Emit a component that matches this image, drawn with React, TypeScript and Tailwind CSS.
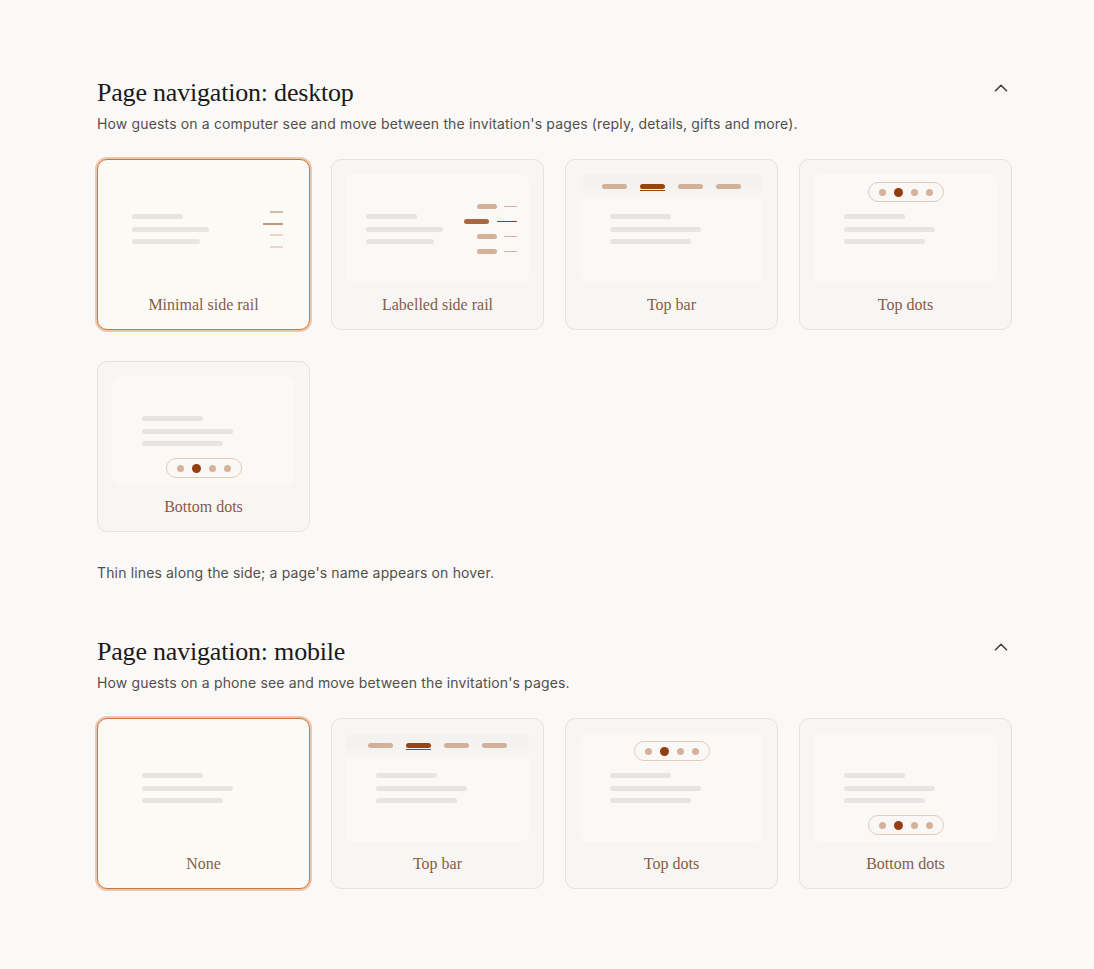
import React from "react";
import { ChevronUp } from "lucide-react";

type Kind = "minimal" | "labelled" | "topbar" | "topdots" | "bottomdots" | "none";

function Lines({ rail }: { rail: boolean }) {
  const widths = rail ? ["w-[51px]", "w-[77px]", "w-[68px]"] : ["w-[61px]", "w-[91px]", "w-[81px]"];
  return (
    <div className={`absolute top-[40px] flex flex-col gap-[7.5px] ${rail ? "left-[20px]" : "left-[30px]"}`}>
      {widths.map((w, i) => (
        <div key={i} className={`h-[5px] ${w} rounded-full bg-[#e6e5e2]`} />
      ))}
    </div>
  );
}

function Dots() {
  return (
    <div className="flex h-[20px] w-[76px] items-center justify-center gap-[8px] rounded-full border border-[#e2cab9] bg-[#faf8f6]">
      <div className="h-[7px] w-[7px] rounded-full bg-[#d4b29c]" />
      <div className="h-[9px] w-[9px] rounded-full bg-[#933e10]" />
      <div className="h-[7px] w-[7px] rounded-full bg-[#d4b29c]" />
      <div className="h-[7px] w-[7px] rounded-full bg-[#d4b29c]" />
    </div>
  );
}

function Preview({ kind, selected }: { kind: Kind; selected: boolean }) {
  const rail = kind === "minimal" || kind === "labelled";
  return (
    <div
      className={`relative h-[109px] w-full overflow-hidden rounded-[8px] ${
        selected ? "bg-[#fcfaf5]" : "bg-[#faf9f7]"
      }`}
    >
      {kind === "topbar" && (
        <div className="absolute left-0 right-0 top-0 h-[28px] bg-gradient-to-b from-[#f3f2f0] via-[#f4f3f1] to-[#faf9f7]">
          <div className="flex justify-center gap-[13px] pt-[10px]">
            <div className="h-[5px] w-[25px] rounded-full bg-[#d2b19b]" />
            <div className="flex flex-col gap-[1px]">
              <div className="h-[5px] w-[25px] rounded-full bg-[#964515]" />
              <div className="h-[1px] w-[25px] bg-[#964515]" />
            </div>
            <div className="h-[5px] w-[25px] rounded-full bg-[#d2b19b]" />
            <div className="h-[5px] w-[25px] rounded-full bg-[#d2b19b]" />
          </div>
        </div>
      )}
      <Lines rail={rail} />
      {kind === "minimal" && (
        <div className="absolute right-[12px] top-[37px] flex flex-col items-end gap-[9.5px]">
          <div className="h-[2px] w-[13px] bg-[#d7bba8]" />
          <div className="h-[2px] w-[20px] bg-[#c4987c]" />
          <div className="h-[2px] w-[13px] bg-[#e6d6cb]" />
          <div className="h-[2px] w-[13px] bg-[#e6d6cb]" />
        </div>
      )}
      {kind === "labelled" && (
        <div className="absolute right-[12px] top-[29.5px] flex flex-col items-end gap-[10px]">
          {[0, 1, 2, 3].map((i) =>
            i === 1 ? (
              <div key={i} className="flex h-[5px] items-center gap-[8px]">
                <div className="h-[5px] w-[25px] rounded-full bg-[#a8673e]" />
                <div className="h-[1px] w-[20px] bg-[#8e3e12]" />
              </div>
            ) : (
              <div key={i} className="flex h-[5px] items-center gap-[7px]">
                <div className="h-[5px] w-[20px] rounded-full bg-[#d3b19b]" />
                <div className="h-[1px] w-[13px] bg-[#d5b19b]" />
              </div>
            )
          )}
        </div>
      )}
      {kind === "topdots" && (
        <div className="absolute left-0 right-0 top-[8px] flex justify-center">
          <Dots />
        </div>
      )}
      {kind === "bottomdots" && (
        <div className="absolute bottom-[7px] left-0 right-0 flex justify-center">
          <Dots />
        </div>
      )}
    </div>
  );
}

function Card({ kind, label, selected = false }: { kind: Kind; label: string; selected?: boolean }) {
  return (
    <div
      className={`flex h-[171px] flex-col items-center rounded-[10px] border p-[14px] ${
        selected
          ? "border-[#c8773f] bg-[#fcfaf5] shadow-[0_0_0_2px_#ebc9ae]"
          : "border-[#e6e3df] bg-[#f7f6f4]"
      }`}
    >
      <Preview kind={kind} selected={selected} />
      <div
        className="mt-[12px] text-[16px] leading-[20px] text-[#875c45]"
        style={{ fontFamily: '"Liberation Serif", "DejaVu Serif", serif' }}
      >
        {label}
      </div>
    </div>
  );
}

function Header({ title, desc }: { title: string; desc: string }) {
  return (
    <div>
      <div className="flex items-start justify-between">
        <h2
          className="text-[26px] leading-[32px] tracking-[-0.2px] text-[#1c1917]"
          style={{ fontFamily: '"Liberation Serif", "DejaVu Serif", serif' }}
        >
          {title}
        </h2>
        <ChevronUp size={22} strokeWidth={1.75} className="text-[#44403c]" />
      </div>
      <p className="mt-[5px] text-[14px] leading-[20px] tracking-[0.15px] text-[#524f4b]">{desc}</p>
    </div>
  );
}

export default function App() {
  return (
    <div
      className="min-h-[969px] w-full bg-[#faf9f7] pt-[77px]"
      style={{ fontFamily: 'Inter, "Noto Sans", sans-serif' }}
    >
      <div className="ml-[97px] w-[915px]">
        <section>
          <Header
            title="Page navigation: desktop"
            desc="How guests on a computer see and move between the invitation's pages (reply, details, gifts and more)."
          />
          <div className="mt-[25px] grid grid-cols-4 gap-x-[21px] gap-y-[31px]">
            <Card kind="minimal" label="Minimal side rail" selected />
            <Card kind="labelled" label="Labelled side rail" />
            <Card kind="topbar" label="Top bar" />
            <Card kind="topdots" label="Top dots" />
            <Card kind="bottomdots" label="Bottom dots" />
          </div>
          <p className="mt-[31px] text-[14px] leading-[20px] tracking-[0.15px] text-[#524f4b]">
            Thin lines along the side; a page's name appears on hover.
          </p>
        </section>
        <section className="mt-[53px]">
          <Header
            title="Page navigation: mobile"
            desc="How guests on a phone see and move between the invitation's pages."
          />
          <div className="mt-[25px] grid grid-cols-4 gap-x-[21px] gap-y-[31px]">
            <Card kind="none" label="None" selected />
            <Card kind="topbar" label="Top bar" />
            <Card kind="topdots" label="Top dots" />
            <Card kind="bottomdots" label="Bottom dots" />
          </div>
        </section>
      </div>
    </div>
  );
}
